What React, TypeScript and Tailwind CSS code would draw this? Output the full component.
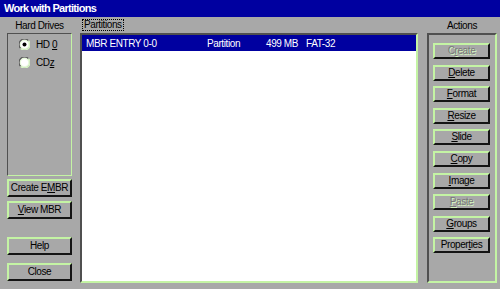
import React from "react";

const GREEN = "#c4f4a4";

function U({ children }: { children: React.ReactNode }) {
  return <span className="underline underline-offset-[1px] decoration-[1px]">{children}</span>;
}

function Btn({
  children,
  disabled,
  h = "h-[16px]",
}: {
  children: React.ReactNode;
  disabled?: boolean;
  h?: string;
}) {
  return (
    <div
      className={
        "flex items-center justify-center border-2 border-t-[#c4f4a4] border-l-[#c4f4a4] border-b-[#141414] border-r-[#141414] bg-[#a8a8a8] leading-none " +
        h +
        (disabled ? " text-[#787878] [text-shadow:1px_1px_0_#d4f4c0]" : " text-black")
      }
    >
      {children}
    </div>
  );
}

function Radio({ checked }: { checked?: boolean }) {
  return (
    <svg width="11" height="11" viewBox="0 0 11 11" className="shrink-0">
      <circle cx="5.5" cy="5.5" r="5" fill="#e8fadc" />
      <path d="M1.6 9.4 A5 5 0 0 1 9.4 1.6" stroke="#585858" strokeWidth="1.2" fill="none" />
      <path d="M9.4 1.6 A5 5 0 0 1 1.6 9.4" stroke="#d8f8c4" strokeWidth="1.2" fill="none" />
      <circle cx="5.5" cy="5.5" r="3.6" fill="#ffffff" />
      {checked && <circle cx="5.5" cy="5.5" r="2" fill="#000000" />}
    </svg>
  );
}

export default function App() {
  return (
    <div className="w-[500px] h-[289px] overflow-hidden bg-[#a8a8a8] font-['Liberation_Sans',Arial,sans-serif] text-[10px] tracking-[-0.4px] text-black">
      <div className="h-[17px] bg-[#0000a0] text-white font-bold text-[11px] tracking-[-0.7px] pl-[4px] flex items-center">
        Work with Partitions
      </div>
      <div className="flex pl-[7px]">
        {/* Left column */}
        <div className="w-[65px] flex flex-col">
          <div className="h-[16px] flex items-center justify-center">Hard Drives</div>
          <div className="h-[143px] border border-t-[#505050] border-l-[#505050] border-r-[#c4f4a4] border-b-[#c4f4a4] pl-[11px] pt-[4px] flex flex-col gap-[6px]">
            <div className="h-[12px] flex items-center gap-[6px]">
              <Radio checked />
              <span>
                HD <U>0</U>
              </span>
            </div>
            <div className="h-[12px] flex items-center gap-[6px]">
              <Radio />
              <span>
                CD<U>z</U>
              </span>
            </div>
          </div>
          <div className="mt-[3px] flex flex-col">
            <Btn h="h-[18px]">
              <span>
                Create E<U>M</U>BR
              </span>
            </Btn>
            <div className="mt-[4px]">
              <Btn h="h-[18px]">
                <span>
                  <U>V</U>iew MBR
                </span>
              </Btn>
            </div>
            <div className="mt-[18px]">
              <Btn h="h-[18px]">Help</Btn>
            </div>
            <div className="mt-[8px]">
              <Btn h="h-[18px]">Close</Btn>
            </div>
          </div>
        </div>

        {/* Middle column */}
        <div className="ml-[8px] w-[338px] flex flex-col">
          <div className="h-[16px] flex items-center">
            <span className="ml-[2px] border border-dotted border-black px-[1px] leading-[10px]">Partitions</span>
          </div>
          <div className="h-[250px] border-2 border-t-[#505050] border-l-[#505050] border-r-[#c4f4a4] border-b-[#c4f4a4] bg-white">
            <div className="h-[16px] bg-[#0000a0] text-white grid grid-cols-[121px_59px_40px_1fr] items-center pl-[4px]">
              <span>MBR ENTRY 0-0</span>
              <span>Partition</span>
              <span>499 MB</span>
              <span>FAT-32</span>
            </div>
          </div>
        </div>

        {/* Right column */}
        <div className="ml-[9px] w-[70px] flex flex-col">
          <div className="h-[16px] flex items-center justify-center">Actions</div>
          <div className="h-[250px] border-2 border-t-[#505050] border-l-[#505050] border-r-[#c4f4a4] border-b-[#c4f4a4] pl-[4px] pr-[5px] pt-[8px] flex flex-col gap-[5.6px]">
            <Btn disabled>
              <span>
                C<U>r</U>eate
              </span>
            </Btn>
            <Btn>
              <span>
                <U>D</U>elete
              </span>
            </Btn>
            <Btn>
              <span>
                <U>F</U>ormat
              </span>
            </Btn>
            <Btn>
              <span>
                <U>R</U>esize
              </span>
            </Btn>
            <Btn>
              <span>
                <U>S</U>lide
              </span>
            </Btn>
            <Btn>
              <span>
                <U>C</U>opy
              </span>
            </Btn>
            <Btn>
              <span>
                <U>I</U>mage
              </span>
            </Btn>
            <Btn disabled>
              <span>
                <U>P</U>aste
              </span>
            </Btn>
            <Btn>
              <span>
                <U>G</U>roups
              </span>
            </Btn>
            <Btn>
              <span>
                Proper<U>t</U>ies
              </span>
            </Btn>
          </div>
        </div>
      </div>
    </div>
  );
}
